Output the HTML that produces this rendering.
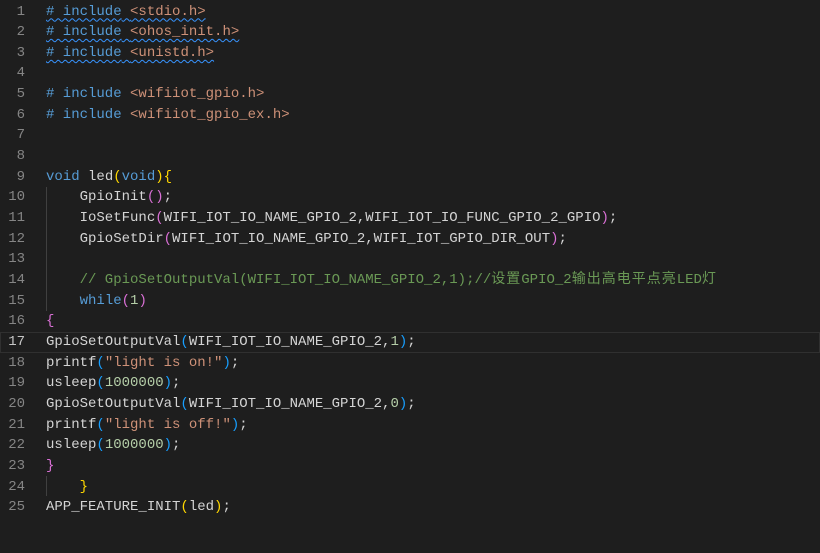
<!DOCTYPE html>
<html><head><meta charset="utf-8"><style>
html,body{margin:0;padding:0;background:#1e1e1e;width:820px;height:553px;overflow:hidden}
.ed{position:absolute;left:0;top:1.5px;width:820px;font-family:"Liberation Mono","Noto Sans CJK SC",monospace;font-size:14px;}
.l{position:relative;height:20.67px;line-height:20.67px;white-space:pre;color:#d4d4d4}
.n{position:absolute;left:0;width:25px;text-align:right;color:#858585}
.c{position:absolute;left:46px}
.act .n{color:#c6c6c6}
.act{outline:1px solid #303030;outline-offset:-1px}
.k{color:#569cd6}.s{color:#ce9178}.m{color:#b5cea8}.cm{color:#6a9955}
.y{color:#ffd700}.p{color:#da70d6}.b{color:#179fff}
.w{text-decoration:underline wavy #3794ff;text-decoration-thickness:1px;text-underline-offset:3px}
.g{position:absolute;left:46px;width:1px;background:#404040}
.z{letter-spacing:1px}
</style></head><body>
<div class="g" style="top:187px;height:124px"></div>
<div class="g" style="top:476px;height:20px"></div>
<div class="ed">
<div class="l"><span class="n">1</span><span class="c w"><span class="k"># include</span> <span class="s">&lt;stdio.h&gt;</span></span></div>
<div class="l"><span class="n">2</span><span class="c w"><span class="k"># include</span> <span class="s">&lt;ohos_init.h&gt;</span></span></div>
<div class="l"><span class="n">3</span><span class="c w"><span class="k"># include</span> <span class="s">&lt;unistd.h&gt;</span></span></div>
<div class="l"><span class="n">4</span></div>
<div class="l"><span class="n">5</span><span class="c"><span class="k"># include</span> <span class="s">&lt;wifiiot_gpio.h&gt;</span></span></div>
<div class="l"><span class="n">6</span><span class="c"><span class="k"># include</span> <span class="s">&lt;wifiiot_gpio_ex.h&gt;</span></span></div>
<div class="l"><span class="n">7</span></div>
<div class="l"><span class="n">8</span></div>
<div class="l"><span class="n">9</span><span class="c"><span class="k">void</span> led<span class="y">(</span><span class="k">void</span><span class="y">){</span></span></div>
<div class="l"><span class="n">10</span><span class="c">    GpioInit<span class="p">()</span>;</span></div>
<div class="l"><span class="n">11</span><span class="c">    IoSetFunc<span class="p">(</span>WIFI_IOT_IO_NAME_GPIO_2,WIFI_IOT_IO_FUNC_GPIO_2_GPIO<span class="p">)</span>;</span></div>
<div class="l"><span class="n">12</span><span class="c">    GpioSetDir<span class="p">(</span>WIFI_IOT_IO_NAME_GPIO_2,WIFI_IOT_GPIO_DIR_OUT<span class="p">)</span>;</span></div>
<div class="l"><span class="n">13</span></div>
<div class="l"><span class="n">14</span><span class="c cm">    // GpioSetOutputVal(WIFI_IOT_IO_NAME_GPIO_2,1);//<span class="z">设置</span>GPIO_2<span class="z">输出高电平点亮</span>LED<span class="z">灯</span></span></div>
<div class="l"><span class="n">15</span><span class="c">    <span class="k">while</span><span class="p">(</span><span class="m">1</span><span class="p">)</span></span></div>
<div class="l"><span class="n">16</span><span class="c"><span class="p">{</span></span></div>
<div class="l act"><span class="n">17</span><span class="c">GpioSetOutputVal<span class="b">(</span>WIFI_IOT_IO_NAME_GPIO_2,<span class="m">1</span><span class="b">)</span>;</span></div>
<div class="l"><span class="n">18</span><span class="c">printf<span class="b">(</span><span class="s">"light is on!"</span><span class="b">)</span>;</span></div>
<div class="l"><span class="n">19</span><span class="c">usleep<span class="b">(</span><span class="m">1000000</span><span class="b">)</span>;</span></div>
<div class="l"><span class="n">20</span><span class="c">GpioSetOutputVal<span class="b">(</span>WIFI_IOT_IO_NAME_GPIO_2,<span class="m">0</span><span class="b">)</span>;</span></div>
<div class="l"><span class="n">21</span><span class="c">printf<span class="b">(</span><span class="s">"light is off!"</span><span class="b">)</span>;</span></div>
<div class="l"><span class="n">22</span><span class="c">usleep<span class="b">(</span><span class="m">1000000</span><span class="b">)</span>;</span></div>
<div class="l"><span class="n">23</span><span class="c"><span class="p">}</span></span></div>
<div class="l"><span class="n">24</span><span class="c">    <span class="y">}</span></span></div>
<div class="l"><span class="n">25</span><span class="c">APP_FEATURE_INIT<span class="y">(</span>led<span class="y">)</span>;</span></div>
</div>
</body></html>
